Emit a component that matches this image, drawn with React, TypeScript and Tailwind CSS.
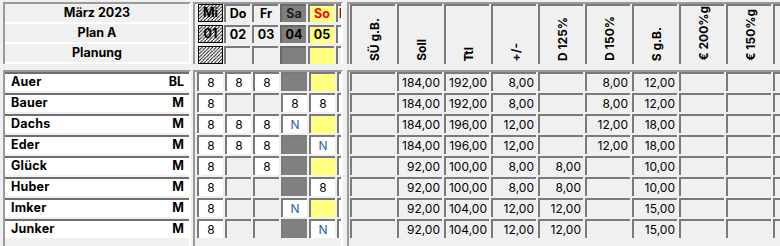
import React from 'react'

type DayVal = '8' | 'N' | 'e' | 'g' | 'y'

interface Person {
  name: string
  role: string
  days: DayVal[]
  vals: string[]
}

const people: Person[] = [
  { name: 'Auer', role: 'BL', days: ['8', '8', '8', 'g', 'y'], vals: ['', '184,00', '192,00', '8,00', '', '8,00', '12,00', '', ''] },
  { name: 'Bauer', role: 'M', days: ['8', 'e', 'e', '8', '8'], vals: ['', '184,00', '192,00', '8,00', '', '8,00', '12,00', '', ''] },
  { name: 'Dachs', role: 'M', days: ['8', '8', '8', 'N', 'y'], vals: ['', '184,00', '196,00', '12,00', '', '12,00', '18,00', '', ''] },
  { name: 'Eder', role: 'M', days: ['8', '8', '8', 'g', 'N'], vals: ['', '184,00', '196,00', '12,00', '', '12,00', '18,00', '', ''] },
  { name: 'Glück', role: 'M', days: ['8', 'e', '8', 'g', 'y'], vals: ['', '92,00', '100,00', '8,00', '8,00', '', '10,00', '', ''] },
  { name: 'Huber', role: 'M', days: ['8', 'e', 'e', 'g', '8'], vals: ['', '92,00', '100,00', '8,00', '8,00', '', '10,00', '', ''] },
  { name: 'Imker', role: 'M', days: ['8', 'e', 'e', 'N', 'y'], vals: ['', '92,00', '104,00', '12,00', '12,00', '', '15,00', '', ''] },
  { name: 'Junker', role: 'M', days: ['8', 'e', 'e', 'g', 'N'], vals: ['', '92,00', '104,00', '12,00', '12,00', '', '15,00', '', ''] },
]

const columns = ['SÜ g.B.', 'Soll', 'Ttl', '+/-', 'D 125%', 'D 150%', 'S g.B.', '€ 200%g', '€ 150%g']

// striped cell for the current day
function Hatched({ label, id }: { label?: string; id: string }) {
  return (
    <div className="relative ml-[1px] mr-[-1px] w-[25px] h-[18px] shrink-0 border border-black bg-white flex items-center justify-center">
      <svg className="absolute inset-0" width="23" height="16">
        <defs>
          <pattern id={id} width="3.5" height="3.5" patternUnits="userSpaceOnUse">
            <path d="M-1 4.5 L4.5 -1" stroke="#000" strokeWidth="0.9" />
          </pattern>
        </defs>
        <rect width="23" height="16" fill={`url(#${id})`} />
      </svg>
      {label && <span className="relative">{label}</span>}
    </div>
  )
}

function DayCell({ v }: { v: DayVal }) {
  const bg =
    v === 'g' ? 'bg-[#808080]' : v === 'y' ? 'bg-[#ffff80]' : v === 'e' ? 'bg-[#f0f0f0]' : 'bg-white'
  return (
    <div className={`w-[26px] h-[19px] shrink-0 border-t-2 border-l-2 border-[#7a7a7a] flex items-center justify-center ${bg}`}>
      {v === '8' && <span>8</span>}
      {v === 'N' && <span className="text-[#2d64a8]">N</span>}
    </div>
  )
}

export default function App() {
  return (
    <div className="w-[780px] h-[246px] overflow-hidden bg-[#f0f0f0] pt-[2px] flex flex-col gap-[6px] font-[Inter,sans-serif] text-[12px] leading-none text-black">
      {/* header */}
      <div className="flex h-[62px] shrink-0">
        <div className="ml-[3px] w-[188px] shrink-0 border-t-2 border-l-2 border-r-2 border-[#9a9a9a] border-r-white flex flex-col text-[12.5px]">
          {['März 2023', 'Plan A', 'Planung'].map((t) => (
            <div key={t} className="h-[20px] shrink-0 border-b-2 border-white flex items-center justify-center font-bold">
              {t}
            </div>
          ))}
        </div>

        <div className="ml-[2px] w-[150px] shrink-0 border-t-2 border-l-2 border-r-2 border-[#9a9a9a] border-r-white pl-[2px] overflow-hidden flex flex-col gap-[3px] font-bold text-[12.5px]">
          <div className="flex gap-[2px]">
            <Hatched id="h1" label="Mi" />
            <div className="w-[26px] h-[18px] shrink-0 border-t-2 border-l-2 border-[#7a7a7a] flex items-center justify-center">Do</div>
            <div className="w-[26px] h-[18px] shrink-0 border-t-2 border-l-2 border-[#7a7a7a] flex items-center justify-center">Fr</div>
            <div className="w-[26px] h-[18px] shrink-0 border-t-2 border-l-2 border-[#686868] bg-[#808080] text-[#1c1c1c] flex items-center justify-center">Sa</div>
            <div className="w-[26px] h-[18px] shrink-0 border-t-2 border-l-2 border-[#7a7a7a] bg-[#ffff80] text-[#ff0000] flex items-center justify-center">So</div>
            <div className="w-[26px] h-[18px] shrink-0 border-t-2 border-l-2 border-[#7a7a7a] text-[#b00000] flex items-center pl-[1px]">Mo</div>
          </div>
          <div className="flex gap-[2px]">
            <Hatched id="h2" label="01" />
            <div className="w-[26px] h-[18px] shrink-0 border-t-2 border-l-2 border-[#7a7a7a] flex items-center justify-center">02</div>
            <div className="w-[26px] h-[18px] shrink-0 border-t-2 border-l-2 border-[#7a7a7a] flex items-center justify-center">03</div>
            <div className="w-[26px] h-[18px] shrink-0 border-t-2 border-l-2 border-[#686868] bg-[#808080] flex items-center justify-center">04</div>
            <div className="w-[26px] h-[18px] shrink-0 border-t-2 border-l-2 border-[#7a7a7a] bg-[#ffff80] flex items-center justify-center">05</div>
            <div className="w-[26px] h-[18px] shrink-0 border-t-2 border-l-2 border-[#7a7a7a] bg-white" />
          </div>
          <div className="flex gap-[2px]">
            <Hatched id="h3" />
            <div className="w-[26px] h-[18px] shrink-0 border-t-2 border-l-2 border-[#7a7a7a]" />
            <div className="w-[26px] h-[18px] shrink-0 border-t-2 border-l-2 border-[#7a7a7a]" />
            <div className="w-[26px] h-[18px] shrink-0 border-t-2 border-l-2 border-[#686868] bg-[#808080]" />
            <div className="w-[26px] h-[18px] shrink-0 border-t-2 border-l-2 border-[#7a7a7a] bg-[#ffff80]" />
            <div className="w-[26px] h-[18px] shrink-0 border-t-2 border-l-2 border-[#7a7a7a]" />
          </div>
        </div>

        <div className="ml-[4px] flex-1 border-t-2 border-l-2 border-[#9a9a9a] pl-[1px] overflow-hidden flex gap-[2px] font-bold">
          {columns.map((c) => (
            <div key={c} className="w-[45px] h-[60px] shrink-0 border-t-2 border-l-2 border-[#7a7a7a] flex items-end justify-center pb-[3px] pl-[3px]">
              <span className="[writing-mode:vertical-rl] rotate-180 whitespace-nowrap">{c}</span>
            </div>
          ))}
          <div className="w-[45px] h-[60px] shrink-0 border-t-2 border-l-2 border-[#7a7a7a]" />
        </div>
      </div>

      {/* body */}
      <div className="flex flex-1 min-h-0">
        <div className="ml-[3px] w-[188px] shrink-0 border-t-2 border-l-2 border-r-2 border-[#9a9a9a] border-r-white flex flex-col gap-[2px] font-bold text-[12.5px]">
          {people.map((p) => (
            <div key={p.name} className="h-[19px] shrink-0 border-t-2 border-[#6e6e6e] bg-white flex items-center justify-between pl-[6px] pr-[5px]">
              <span className="tracking-[0.2px]">{p.name}</span>
              <span>{p.role}</span>
            </div>
          ))}
        </div>

        <div className="ml-[2px] w-[150px] shrink-0 border-t-2 border-l-2 border-r-2 border-[#9a9a9a] border-r-white pl-[2px] overflow-hidden flex flex-col gap-[2px]">
          {people.map((p) => (
            <div key={p.name} className="flex gap-[2px]">
              {p.days.map((d, i) => (
                <DayCell key={i} v={d} />
              ))}
              <div className="w-[26px] h-[19px] shrink-0 border-t-2 border-l-2 border-[#7a7a7a] bg-white" />
            </div>
          ))}
        </div>

        <div className="ml-[4px] flex-1 border-t-2 border-l-2 border-[#9a9a9a] pl-[1px] overflow-hidden flex flex-col gap-[2px]">
          {people.map((p) => (
            <div key={p.name} className="flex gap-[2px]">
              {[...p.vals, ''].map((v, i) => (
                <div key={i} className="w-[45px] h-[19px] shrink-0 border-t-2 border-l-2 border-[#7a7a7a] bg-[#f0f0f0] flex items-center justify-end pr-[2px]">
                  {v}
                </div>
              ))}
            </div>
          ))}
        </div>
      </div>
    </div>
  )
}
